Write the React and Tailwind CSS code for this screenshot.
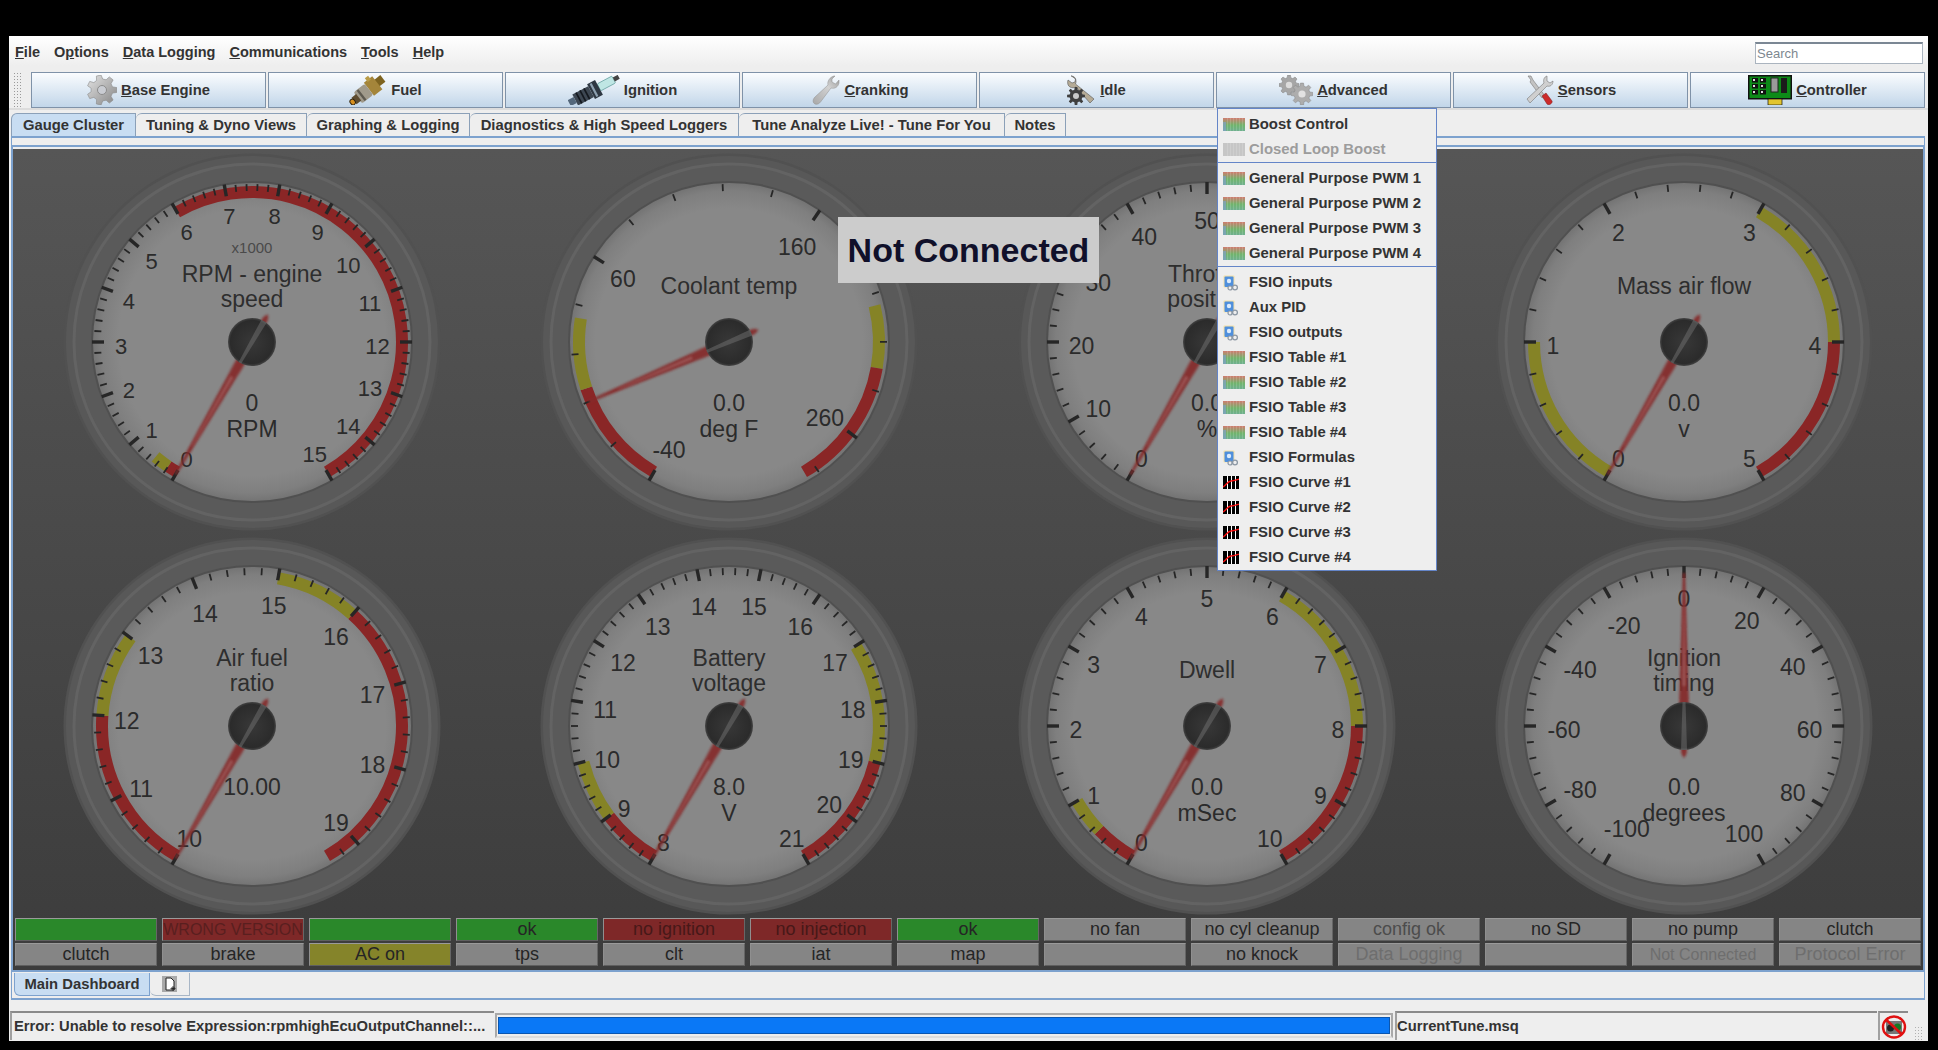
import React from 'react';

const polar = (r, deg) => {
  const t = (deg * Math.PI) / 180;
  return [190 + r * Math.sin(t), 190 - r * Math.cos(t)];
};

const arcPath = (r, a, b) => {
  const [x1, y1] = polar(r, a);
  const [x2, y2] = polar(r, b);
  return `M${x1} ${y1}A${r} ${r} 0 ${b - a > 180 ? 1 : 0} 1 ${x2} ${y2}`;
};

const RED = '#8a2626';
const YEL = '#858326';

const range = (from, n, step = 1) => Array.from({ length: n }, (_, i) => String(from + i * step));

const gauges = [
  { title: ['RPM - engine', 'speed'], value: '0', units: 'RPM', extra: 'x1000', labels: range(0, 16), step: 20, font: 22, zones: [[-150, -146, RED], [-146, -140, YEL], [-30, 150, RED]] },
  { title: ['Coolant temp'], value: '0.0', units: 'deg F', labels: ['-40', '60', '160', '260'], step: 92.3, extraTicks: 1, font: 23, needle: -113, zones: [[-150, -108, RED], [-108, -81, YEL], [76, 100, YEL], [100, 150, RED]] },
  { title: ['Throttle', 'position'], value: '0.0', units: '%', labels: range(0, 11, 10), step: 30, font: 23, zones: [[90, 120, YEL], [120, 150, RED]] },
  { title: ['Mass air flow'], value: '0.0', units: 'v', labels: range(0, 6), step: 60, font: 23, zones: [[-150, -90, YEL], [30, 90, YEL], [90, 150, RED]] },
  { title: ['Air fuel', 'ratio'], value: '10.00', units: '', labels: range(10, 10), step: 32, extraTicks: 1, font: 23, zones: [[-150, -86, RED], [-86, -54, YEL], [10, 42, YEL], [42, 150, RED]] },
  { title: ['Battery', 'voltage'], value: '8.0', units: 'V', labels: range(8, 14), step: 300 / 13, font: 23, zones: [[-150, -127, RED], [-127, -104, YEL], [58, 104, YEL], [104, 150, RED]] },
  { title: ['Dwell'], value: '0.0', units: 'mSec', labels: range(0, 11), step: 30, font: 23, zones: [[-150, -134, RED], [-134, -120, YEL], [30, 90, YEL], [90, 150, RED]] },
  { title: ['Ignition', 'timing'], value: '0.0', units: 'degrees', labels: range(-100, 11, 20), step: 30, font: 23, needle: 0, zones: [] },
];

function Gauge({ g, idx }) {
  const needle = g.needle ?? -150;
  const ticks = [];
  const divs = 5;
  const total = (g.labels.length - 1) * divs + (g.extraTicks ? divs : 0);
  for (let i = 0; i <= total; i++) {
    const a = -150 + (i * g.step) / divs;
    if (a > 150.5) break;
    const major = i % divs === 0;
    const [x1, y1] = polar(major ? 160 : 158, a);
    const [x2, y2] = polar(major ? 148 : 151, a);
    ticks.push(<line key={i} x1={x1} y1={y1} x2={x2} y2={y2} stroke="#262626" strokeWidth={major ? 3.4 : 1.8} />);
  }
  const titleYs = g.title.length === 2 ? [-60, -35] : [-48];
  return (
    <svg width="380" height="380" viewBox="0 0 380 380">
      <defs>
        <radialGradient id={`face${idx}`}>
          <stop offset="0.84" stopColor="#888888" />
          <stop offset="0.95" stopColor="#7f7f7f" />
          <stop offset="1" stopColor="#747474" />
        </radialGradient>
        <radialGradient id={`hub${idx}`}>
          <stop offset="0" stopColor="#383838" />
          <stop offset="0.9" stopColor="#2b2b2b" />
          <stop offset="1" stopColor="#444444" />
        </radialGradient>
        <filter id={`soft${idx}`} x="-30%" y="-5%" width="160%" height="110%">
          <feGaussianBlur stdDeviation="0.8" />
        </filter>
      </defs>
      <circle cx="190" cy="190" r="188.5" fill="#515151" />
      <circle cx="190" cy="190" r="186" fill="#585858" />
      <circle cx="190" cy="190" r="178" fill="#5a5a5a" stroke="#636363" strokeWidth="3" />
      <circle cx="190" cy="190" r="161" fill="#505050" />
      <circle cx="190" cy="190" r="159" fill={`url(#face${idx})`} />
      {g.zones.map(([a, b, c]) => (
        <path key={a} d={arcPath(150, a, b)} fill="none" stroke={c} strokeWidth="12" />
      ))}
      {ticks}
      {g.labels.map((t, i) => {
        const a = -150 + i * g.step;
        const [x, y] = polar(131 - 5.5 * (t.length - 1), a);
        return (
          <text key={t} x={x} y={y + 4} textAnchor="middle" dominantBaseline="central" fontSize={g.font} fill="#2b2b2b">
            {t}
          </text>
        );
      })}
      {g.extra && (
        <text x="190" y="101" textAnchor="middle" fontSize="15" fill="#4a4a4a">
          {g.extra}
        </text>
      )}
      {g.title.map((t, i) => (
        <text key={t} x="190" y={190 + titleYs[i]} textAnchor="middle" fontSize="23" fill="#2e2e2e">
          {t}
        </text>
      ))}
      <text x="190" y="259" textAnchor="middle" fontSize="23" fill="#2b2b2b">
        {g.value}
      </text>
      <text x="190" y="285" textAnchor="middle" fontSize="23" fill="#2b2b2b">
        {g.units}
      </text>
      <g transform={`rotate(${needle} 190 190)`}>
        <polygon points="188.8,37 191.2,37 195.5,190 192.500,218 190,222 187.500,218 184.500,190" fill="#852c2c" opacity="0.92" filter={`url(#soft${idx})`} />
        <polygon points="189.6,70 190.4,70 191.500,150 188.500,150" fill="#a86a6a" opacity="0.65" filter={`url(#soft${idx})`} />
      </g>
      <circle cx="190" cy="190" r="24" fill={`url(#hub${idx})`} />
      <g transform={`rotate(${needle} 190 190)`}>
        <polygon points="188.500,166 191.500,166 193,214 187,214" fill="#777777" opacity="0.45" />
      </g>
    </svg>
  );
}

const gearPath = (cx, cy, ro, ri, teeth) => {
  const pts = [];
  for (let i = 0; i < teeth; i++) {
    const s = (i * 2 * Math.PI) / teeth;
    const w = (2 * Math.PI) / teeth;
    [[-0.32, ri], [-0.18, ro], [0.18, ro], [0.32, ri]].forEach(([o, r]) => {
      pts.push(`${(cx + r * Math.cos(s + o * w)).toFixed(2)},${(cy + r * Math.sin(s + o * w)).toFixed(2)}`);
    });
  }
  return pts.join(' ');
};

const GearIcon = () => (
  <svg width="30" height="30" viewBox="0 0 30 30">
    <defs>
      <linearGradient id="cog" x1="0" y1="0" x2="1" y2="1">
        <stop offset="0" stopColor="#e4e4e4" />
        <stop offset="1" stopColor="#858585" />
      </linearGradient>
    </defs>
    <polygon points={gearPath(15, 15, 15, 11, 7)} fill="url(#cog)" stroke="#8a8a8a" strokeWidth="0.6" />
    <circle cx="15" cy="15" r="4.5" fill="#c9ccd2" stroke="#8c8c8c" />
  </svg>
);

const InjectorIcon = () => (
  <svg width="38" height="30" viewBox="0 0 38 30">
    <g transform="rotate(-38 19 15) translate(19 15) scale(1.18) translate(-19 -15)">
      <rect x="28" y="11.5" width="7" height="7" fill="#7d6320" />
      <rect x="20" y="8" width="9" height="14" fill="#a4853a" />
      <rect x="23" y="5.5" width="3.5" height="4" fill="#b99c48" />
      <rect x="8" y="9" width="12" height="12" rx="2" fill="#a09a8b" />
      <rect x="11" y="9.5" width="2" height="11" fill="#5e5a50" />
      <rect x="4" y="11.5" width="5" height="7" fill="#5d4c30" />
      <rect x="0.5" y="12.5" width="4" height="5" rx="2" fill="#d78f1e" stroke="#2a1f0c" strokeWidth="0.8" />
    </g>
  </svg>
);

const PlugIcon = () => (
  <svg width="52" height="30" viewBox="0 0 52 30">
    <g transform="rotate(-28 26 15) translate(26 15) scale(1.12) translate(-26 -15)">
      <rect x="31" y="11.5" width="15" height="7" rx="1" fill="#bfe6e4" stroke="#5c9a9a" strokeWidth="0.6" />
      <rect x="46" y="13" width="5" height="4" fill="#444444" />
      <rect x="23" y="7.5" width="8" height="15" fill="#2e3742" />
      <rect x="25" y="8.5" width="2" height="13" fill="#8da0b0" />
      <rect x="7" y="9.5" width="16" height="11" fill="#3d4752" />
      <rect x="10" y="9.5" width="1.5" height="11" fill="#14191f" />
      <rect x="14" y="9.5" width="1.5" height="11" fill="#14191f" />
      <rect x="18" y="9.5" width="1.5" height="11" fill="#14191f" />
      <rect x="1" y="12" width="6" height="6" fill="#54687c" />
    </g>
  </svg>
);

const WrenchIcon = () => (
  <svg width="30" height="30" viewBox="0 0 30 30">
    <defs>
      <linearGradient id="wr" x1="0" y1="1" x2="1" y2="0">
        <stop offset="0" stopColor="#a8a8a8" />
        <stop offset="0.6" stopColor="#d2d2d2" />
        <stop offset="1" stopColor="#9a9a9a" />
      </linearGradient>
    </defs>
    <path d="M24 1C20 2 17 6 18 10L5 22C2 25 3 28 5 29C8 30 10 28 12 25L21 13C25 14 28 12 29 8L29 5L25.500 9L22 7L22 4L25 1Z" fill="url(#wr)" stroke="#8f8f8f" strokeWidth="0.5" />
  </svg>
);

const IdleIcon = () => (
  <svg width="29" height="30" viewBox="0 0 29 30">
    <g transform="translate(29 0) scale(-1 1)">
      <path d="M25 1c-3 0-5 2-5 5 0 1 0 2 .5 3L2 24l4 4L20 12c2 1 4 1 6 0 2-1 3-4 2-7l-4 3-3-1-.5-3 4-3z" fill="#b5ab96" stroke="#555555" strokeWidth="0.6" />
    </g>
    <polygon points={gearPath(9, 21, 9, 6.5, 8)} fill="#3f3f3f" />
    <circle cx="9" cy="21" r="3" fill="#c9c9c9" />
  </svg>
);

const GearsIcon = () => (
  <svg width="34" height="30" viewBox="0 0 34 30">
    <polygon points={gearPath(10, 10, 10, 7.5, 8)} fill="#a6a6a6" stroke="#848484" strokeWidth="0.5" />
    <circle cx="10" cy="10" r="3.2" fill="#dcdcdc" />
    <polygon points={gearPath(23, 19, 11, 8, 8)} fill="#adadad" stroke="#848484" strokeWidth="0.5" />
    <circle cx="23" cy="19" r="3.6" fill="#e2e2e2" />
  </svg>
);

const SensorsIcon = () => (
  <svg width="29" height="30" viewBox="0 0 29 30">
    <path d="M3 1l3 4-1 2 12 16 3-2L8 5 6 1z" fill="#c3c3c3" stroke="#777777" strokeWidth="0.6" />
    <path d="M22 1c-3 1-4 4-3 7L2 24l3 4L22 11c3 1 6-1 6-5l-3 2-3-2z" fill="#cfcfcf" stroke="#777777" strokeWidth="0.6" />
    <path d="M17 21l4-3 6 8c1 2-3 5-5 3z" fill="#cc2b2b" stroke="#7a1a1a" strokeWidth="0.5" />
  </svg>
);

const BoardIcon = () => (
  <svg width="44" height="30" viewBox="0 0 44 30">
    <rect x="0.750" y="0.750" width="42.500" height="23" fill="#0d8a18" stroke="#111111" strokeWidth="1.5" />
    {[3, 9, 15].map((y) => (
      <g key={y}>
        <rect x="4" y={y} width="6" height="4.500" fill="#111111" />
        <rect x="12" y={y} width="6" height="4.500" fill="#111111" />
        <rect x="5" y={y + 1} width="2" height="2" fill="#dddddd" />
        <rect x="13" y={y + 1} width="2" height="2" fill="#dddddd" />
      </g>
    ))}
    <rect x="23" y="3" width="7" height="14" fill="#9a9a9a" stroke="#222222" />
    <rect x="33" y="3" width="6" height="15" fill="#1b1b1b" />
    <rect x="20" y="24" width="14" height="6" fill="#e2c52f" stroke="#111111" strokeWidth="0.7" />
  </svg>
);

const TableIcon = ({ off }) => (
  <svg width="22" height="13" viewBox="0 0 22 13">
    <defs>
      <linearGradient id="tbl" x1="0" y1="0" x2="0" y2="1">
        <stop offset="0" stopColor="#d07c70" />
        <stop offset="0.55" stopColor="#70b46c" />
        <stop offset="1" stopColor="#6fb08f" />
      </linearGradient>
    </defs>
    <rect width="22" height="13" fill={off ? '#c6c6c6' : 'url(#tbl)'} />
    {!off && <rect width="3" height="9" y="4" fill="#7f9fc6" opacity="0.7" />}
    {[4, 7, 10, 13, 16, 19].map((x) => (
      <rect key={x} x={x} width="1" height="13" fill="#ffffff" opacity="0.15" />
    ))}
  </svg>
);

const DocIcon = () => (
  <svg width="16" height="16" viewBox="0 0 16 16">
    <rect x="0.500" y="0.500" width="11" height="12" rx="1" fill="#f4e0a8" />
    <rect x="1.500" y="1.500" width="9" height="10.500" rx="1" fill="#4f8fdc" />
    <circle cx="6" cy="6" r="2.200" fill="#dcebfb" />
    <circle cx="12" cy="12.500" r="2.400" fill="#eeeeee" stroke="#8d98a4" strokeWidth="1.300" />
    <circle cx="7" cy="13" r="2" fill="#eeeeee" stroke="#8d98a4" strokeWidth="1.200" />
  </svg>
);

const CurveIcon = () => (
  <svg width="16" height="13" viewBox="0 0 16 13">
    <rect width="16" height="13" fill="#000000" />
    {[4, 8, 12].map((x) => (
      <rect key={x} x={x} width="1" height="13" fill="#ffffff" />
    ))}
    <path d="M0 11C4 8 5 5 8 5s5-1 8-2" fill="none" stroke="#ff1010" strokeWidth="1.300" />
  </svg>
);

const menuLabel = (label, ul) => {
  if (ul == null) return label;
  return (
    <>
      {label.slice(0, ul)}
      <span className="underline">{label[ul]}</span>
      {label.slice(ul + 1)}
    </>
  );
};

const topMenu = [['File', 0], ['Options', 1], ['Data Logging', 0], ['Communications', 0], ['Tools', 0], ['Help', 0]];

const toolButtons = [
  { label: 'Base Engine', ul: 0, icon: <GearIcon /> },
  { label: 'Fuel', icon: <InjectorIcon /> },
  { label: 'Ignition', icon: <PlugIcon /> },
  { label: 'Cranking', ul: 0, icon: <WrenchIcon /> },
  { label: 'Idle', ul: 0, icon: <IdleIcon /> },
  { label: 'Advanced', ul: 0, icon: <GearsIcon /> },
  { label: 'Sensors', ul: 0, icon: <SensorsIcon /> },
  { label: 'Controller', ul: 0, icon: <BoardIcon /> },
];

const tabs = ['Gauge Cluster', 'Tuning & Dyno Views', 'Graphing & Logging', 'Diagnostics & High Speed Loggers', 'Tune Analyze Live! - Tune For You', 'Notes'];
const tabWidths = ['w-[125px]', 'w-[171px]', 'w-[163px]', 'w-[269px]', 'w-[266px]', 'w-[61px]'];

const GREEN_BG = 'bg-[#2a882a]';
const RED_BG = 'bg-[#7e2828]';
const GRAY_BG = 'bg-[#858585]';
const OLIVE_BG = 'bg-[#85842a]';
const DARK = 'text-[#252525]';
const DIM = 'text-[#6e6e6e]';
const DARK_RED = 'text-[#471818]';
const LARGE = 'text-[18px]';
const SMALL = 'text-[16px]';

const indicators = [
  ['', GREEN_BG, DARK, LARGE], ['WRONG VERSION', RED_BG, 'text-[#591f1f]', SMALL], ['', GREEN_BG, DARK, LARGE], ['ok', GREEN_BG, DARK, LARGE], ['no ignition', RED_BG, DARK_RED, LARGE], ['no injection', RED_BG, DARK_RED, LARGE], ['ok', GREEN_BG, DARK, LARGE],
  ['no fan', GRAY_BG, DARK, LARGE], ['no cyl cleanup', GRAY_BG, DARK, LARGE], ['config ok', GRAY_BG, 'text-[#4c4c4c]', LARGE], ['no SD', GRAY_BG, DARK, LARGE], ['no pump', GRAY_BG, DARK, LARGE], ['clutch', GRAY_BG, DARK, LARGE],
  ['clutch', GRAY_BG, DARK, LARGE], ['brake', GRAY_BG, DARK, LARGE], ['AC on', OLIVE_BG, DARK, LARGE], ['tps', GRAY_BG, DARK, LARGE], ['clt', GRAY_BG, DARK, LARGE], ['iat', GRAY_BG, DARK, LARGE], ['map', GRAY_BG, DARK, LARGE],
  ['', GRAY_BG, DARK, LARGE], ['no knock', GRAY_BG, DARK, LARGE], ['Data Logging', GRAY_BG, DIM, LARGE], ['', GRAY_BG, DARK, LARGE], ['Not Connected', GRAY_BG, DIM, SMALL], ['Protocol Error', GRAY_BG, DIM, LARGE],
];

const advancedMenu = [
  [['Boost Control', 't'], ['Closed Loop Boost', 'off']],
  [['General Purpose PWM 1', 't'], ['General Purpose PWM 2', 't'], ['General Purpose PWM 3', 't'], ['General Purpose PWM 4', 't']],
  [['FSIO inputs', 'd'], ['Aux PID', 'd'], ['FSIO outputs', 'd'], ['FSIO Table #1', 't'], ['FSIO Table #2', 't'], ['FSIO Table #3', 't'], ['FSIO Table #4', 't'], ['FSIO Formulas', 'd'], ['FSIO Curve #1', 'c'], ['FSIO Curve #2', 'c'], ['FSIO Curve #3', 'c'], ['FSIO Curve #4', 'c']],
];

export default function App() {
  return (
    <div className="h-[1050px] w-[1938px] overflow-hidden bg-black pt-[36px] pl-[9px] [font-family:'Liberation_Sans',Arial,sans-serif]">
      <div className="relative flex h-[1005px] w-[1919px] flex-col bg-[#eeeeee] text-[#333333]">
        {/* Menu bar */}
        <div className="flex h-[30px] shrink-0 items-center justify-between bg-gradient-to-b from-white to-[#eeeeee] pt-[3px] pr-[5px] pl-[6px]">
          <div className="mt-[1px] flex gap-[14px] text-[14.5px] font-bold">
            {topMenu.map(([label, ul]) => (
              <span key={label}>{menuLabel(label, ul)}</span>
            ))}
          </div>
          <input
            placeholder="Search"
            className="h-[22px] w-[168px] border border-[#aab4bf] border-t-2 border-t-[#7b8794] bg-white px-[1px] text-[13px] outline-none placeholder:text-[#7d8790]"
          />
        </div>

        {/* Toolbar */}
        <div className="flex h-[44px] shrink-0 items-start border-b-2 border-[#dcdcdc] pt-[6px] pl-[4px]">
          <div className="mr-[9px] h-[35px] w-[9px] bg-[radial-gradient(#9a9a9a_1px,transparent_1px)] bg-[length:3px_3px]" />
          <div className="flex gap-[2px]">
            {toolButtons.map((b) => (
              <div
                key={b.label}
                className="flex h-[36px] w-[235px] items-center justify-center gap-[4px] border-[1.5px] border-[#7f92a8] bg-gradient-to-b from-[#fafcfe] to-[#c2d6e9] text-[14.8px] font-bold"
              >
                {b.icon}
                <span>{menuLabel(b.label, b.ul)}</span>
              </div>
            ))}
          </div>
        </div>

        {/* Main tabs */}
        <div className="mt-[3px] flex h-[23px] shrink-0 pl-[2px] text-[14.8px] font-bold">
          {tabs.map((t, i) => (
            <div
              key={t}
              className={`${tabWidths[i]} flex items-center justify-center rounded-tl-[6px] border-t border-r border-[#8ba0b8] ${i === 0 ? 'border-l bg-[#c8ddf2]' : 'bg-[#eeeeee]'}`}
            >
              {t}
            </div>
          ))}
        </div>

        {/* Tab pane */}
        <div className="ml-[2px] flex h-[864px] w-[1914px] shrink-0 flex-col border-x border-y-2 border-[#7da2ce] pt-[7px]">
          <div className="flex h-[827px] shrink-0 flex-col border-x border-t-2 border-b-2 border-[#7da2ce] pt-[2px]">
            <div className="flex flex-1 flex-col bg-gradient-to-b from-[#565656] to-[#3c3c3c]">
              <div className="grid grid-cols-4">
                {gauges.map((g, i) => (
                  <div key={g.title[0]} className={`flex items-center justify-center ${i < 4 ? 'h-[385px]' : 'h-[384px]'}`}>
                    <Gauge g={g} idx={i} />
                  </div>
                ))}
              </div>
              <div className="grid grid-cols-[repeat(13,142px)] gap-x-[5px] gap-y-[2px] px-[2px]">
                {indicators.map(([text, bg, color, size], i) => (
                  <div
                    key={i}
                    className={`flex h-[23px] items-center justify-center overflow-hidden border border-t-[#9a9a9a] border-r-[#666666] border-b-[#5f5f5f] border-l-[#8f8f8f] whitespace-nowrap ${size} ${bg} ${color}`}
                  >
                    {text}
                  </div>
                ))}
              </div>
            </div>
          </div>
          <div className="mt-[1px] flex h-[23px] text-[14.8px] font-bold">
            <div className="ml-[2px] flex w-[136px] items-center justify-center rounded-bl-[6px] border-r border-b border-l border-[#7da2ce] bg-[#c8ddf2]">
              Main Dashboard
            </div>
            <div className="flex w-[40px] items-center justify-center rounded-bl-[6px] border-r border-b border-[#a8b6c6]">
              <svg width="16" height="16" viewBox="0 0 16 16">
                <rect width="15" height="16" fill="#a9a9a9" />
                <path d="M4 2h5l3 3v9H4z" fill="#ffffff" stroke="#222222" />
                <path d="M11 10v5M8.500 12.500h5M9.500 11l3 3M12.500 11l-3 3" stroke="#222222" strokeWidth="0.800" />
              </svg>
            </div>
          </div>
        </div>

        {/* Status bar */}
        <div className="mt-[11px] flex h-[29px] shrink-0 items-stretch text-[14.75px] font-bold">
          <div className="ml-[1px] flex w-[484px] items-center overflow-hidden border-t-2 border-l-2 border-t-[#8a8a8a] border-l-[#a0a0a0] pl-[2px] whitespace-nowrap">
            Error: Unable to resolve Expression:rpmhighEcuOutputChannel::...
          </div>
          <div className="my-[2px] ml-[1px] flex w-[898px] border-2 border-[#a9a9a9] border-b-[#dddddd] px-[1px] py-[2px]">
            <div className="flex-1 border border-[#0a56b0] bg-[#0a78f6]" />
          </div>
          <div className="ml-[2px] flex w-[482px] items-center border-t-2 border-l-2 border-t-[#8a8a8a] border-l-[#a0a0a0]">CurrentTune.msq</div>
          <div className="ml-[1px] flex w-[30px] items-center justify-center border-t-2 border-l-2 border-t-[#8a8a8a] border-l-[#a0a0a0]">
            <svg width="26" height="24" viewBox="0 0 26 24">
              <rect x="5" y="6" width="16" height="13" fill="#777777" />
              <circle cx="9.500" cy="13" r="3.500" fill="#222222" />
              <circle cx="16.500" cy="12" r="3.500" fill="#157a24" />
              <ellipse cx="13" cy="12" rx="11" ry="10.500" fill="none" stroke="#e01010" strokeWidth="2.400" />
              <path d="M5 4.500L21 19.500" stroke="#e01010" strokeWidth="2.400" />
            </svg>
          </div>
          <div className="ml-[6px] h-[14px] w-[10px] self-end bg-[radial-gradient(#b0b0b0_1px,transparent_1px)] bg-[length:3px_3px]" />
        </div>

        {/* Not connected notice */}
        <div className="absolute top-[181px] left-[829px] flex h-[66px] w-[261px] items-center justify-center bg-[#cccccc] text-[34px] font-bold text-[#10102a]">
          Not Connected
        </div>

        {/* Advanced dropdown */}
        <div className="absolute top-[72px] left-[1208px] w-[220px] border border-[#6485c8] bg-[#eeeeee] pt-[3px] text-[14.9px] font-bold">
          {advancedMenu.map((group, gi) => (
            <div key={gi}>
              {gi > 0 && <div className="mb-[3px] h-px bg-[#6485c8]" />}
              {group.map(([label, kind]) => (
                <div key={label} className={`flex h-[25px] items-center pl-[5px] whitespace-nowrap ${kind === 'off' ? 'text-[#9c9c9c]' : ''}`}>
                  <div className="flex w-[26px] shrink-0 items-center">
                    {kind === 't' && <TableIcon />}
                    {kind === 'off' && <TableIcon off />}
                    {kind === 'd' && <DocIcon />}
                    {kind === 'c' && <CurveIcon />}
                  </div>
                  {label}
                </div>
              ))}
            </div>
          ))}
        </div>
      </div>
    </div>
  );
}
